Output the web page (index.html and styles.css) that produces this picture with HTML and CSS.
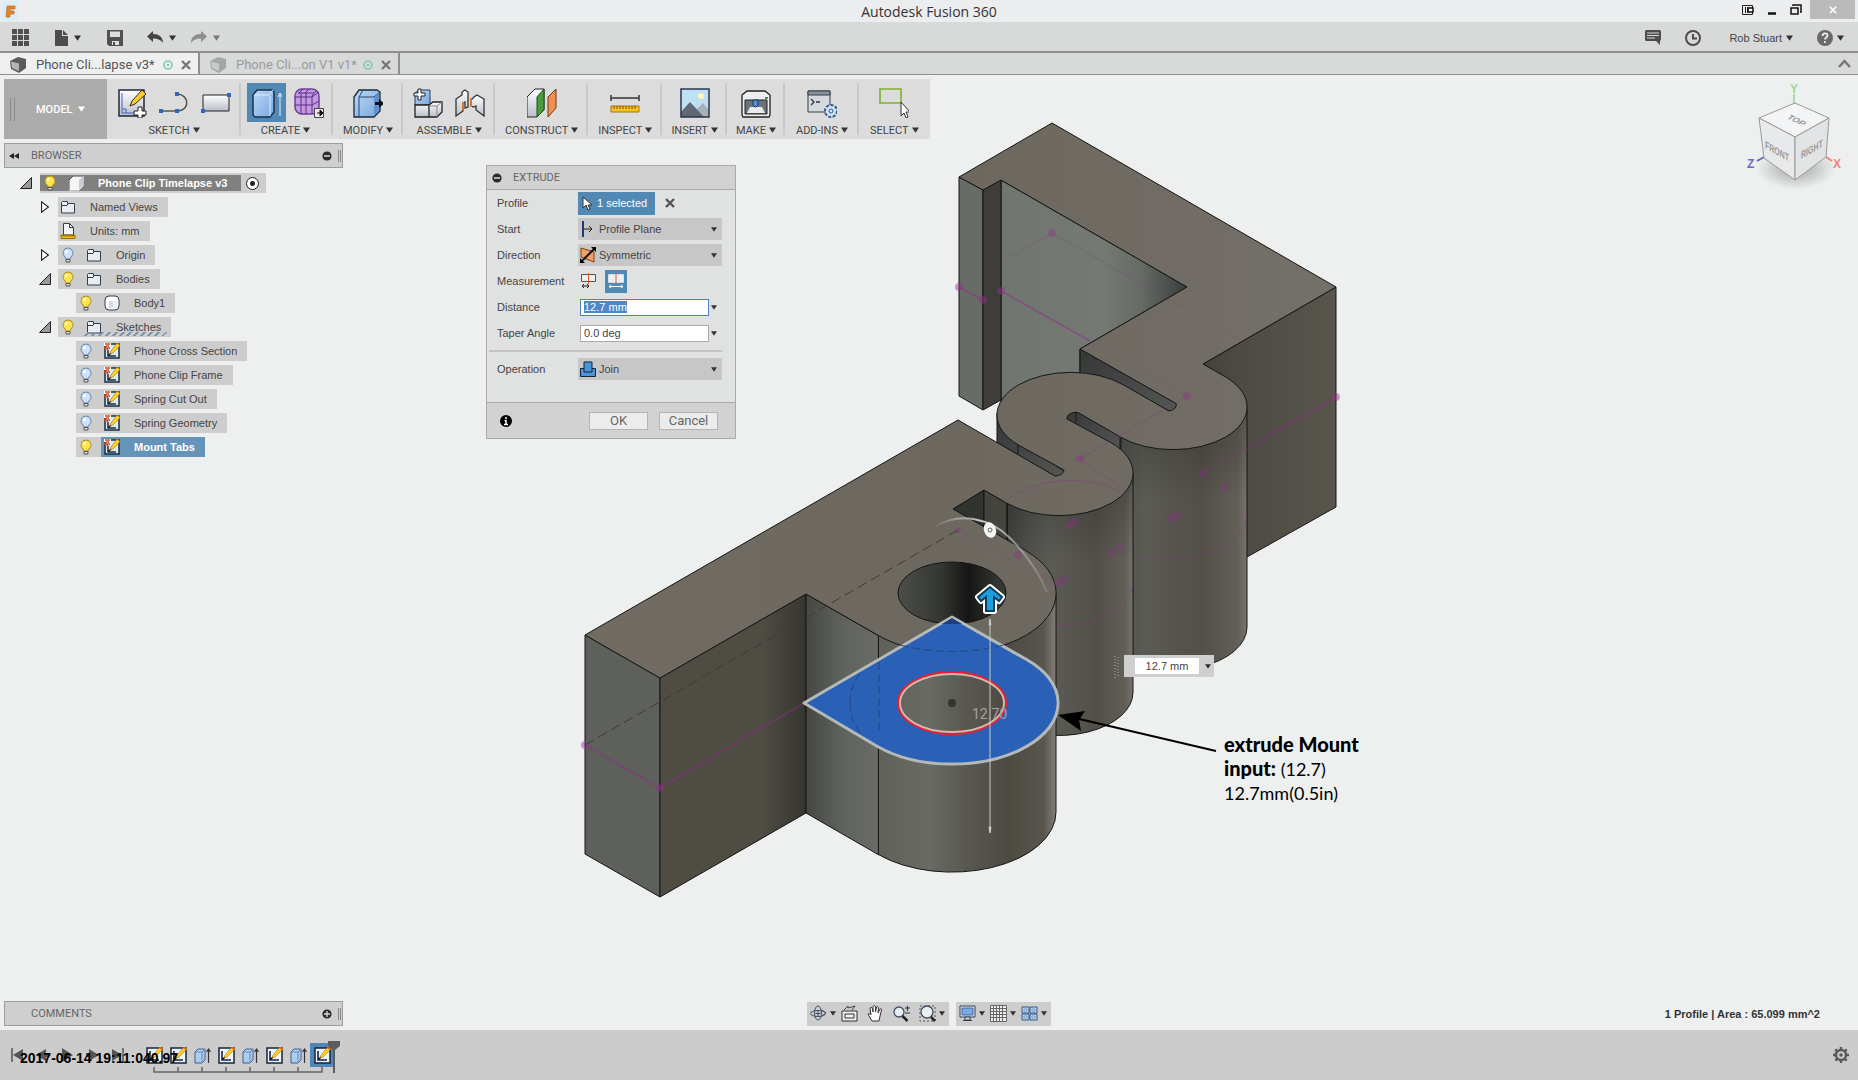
FILE: index.html
```html
<!DOCTYPE html>
<html lang="en">
<head>
  <meta charset="UTF-8">
  <meta name="viewport" content="width=device-width, initial-scale=1.0">
  <title>Autodesk Fusion 360</title>
  <link rel="stylesheet" href="styles.css">
</head>
<body>
  <!-- shared icons -->
  <svg class="defs" aria-hidden="true">
    <defs>
      <linearGradient id="metal" x1="0" y1="0" x2="0" y2="1"><stop offset="0" stop-color="#fff"/><stop offset="1" stop-color="#b9bec8"/></linearGradient>
      <linearGradient id="blue" x1="0" y1="0" x2="1" y2="1"><stop offset="0" stop-color="#bcd8f6"/><stop offset="1" stop-color="#79a7dd"/></linearGradient>
    </defs>
    <symbol id="i-down" viewBox="0 0 8 6"><path d="M0 0h8L4 6z" fill="currentColor"/></symbol>
    <symbol id="i-bulb-on" viewBox="0 0 16 16"><path d="M8 1a5 5 0 0 0-3 9l1 2h4l1-2a5 5 0 0 0-3-9z" fill="#ffe44d" stroke="#a98b2c"/><path d="M6 12.500h4v2.500h-4z" fill="#ddd" stroke="#555"/><circle cx="6.500" cy="4.500" r="1.500" fill="#fff8c0"/></symbol>
    <symbol id="i-bulb-off" viewBox="0 0 16 16"><path d="M8 1a5 5 0 0 0-3 9l1 2h4l1-2a5 5 0 0 0-3-9z" fill="#cfe2fa" stroke="#6583b0"/><path d="M6 12.500h4v2.500h-4z" fill="#ddd" stroke="#555"/><circle cx="6.500" cy="4.500" r="1.500" fill="#fff"/></symbol>
    <symbol id="i-folder" viewBox="0 0 16 16"><path d="M1.500 14V3.500l1-1h5v2h7V14z" fill="#e9edf2" stroke="#333d50"/><path d="M2 6.500h5l1-2" fill="none" stroke="#333d50"/></symbol>
    <symbol id="i-units" viewBox="0 0 16 16"><path d="M3.500 12V.5h6l4 4V12z" fill="#f4f7fa" stroke="#333d50"/><path d="M9.500.5v4h4" fill="none" stroke="#333d50"/><path d="M1 12h14v3.500H1z" fill="#f3c21c" stroke="#9a6a00"/><path d="M3 12v2m2-2v2m2-2v2m2-2v2m2-2v2m2-2v2" stroke="#704c00" stroke-width=".7"/></symbol>
    <symbol id="i-body" viewBox="0 0 16 16"><rect x="1" y="1" width="14" height="14" rx="4" fill="#fff" stroke="#333d50"/><path d="M5 6h4v7H5z" fill="#d5dbe3"/><path d="M10 6h3v7h-3z" fill="#eceff3"/></symbol>
    <symbol id="i-cube" viewBox="0 0 16 16"><path d="M1 5l4-4h10v10l-4 4H1z" fill="#f3f5f7" stroke="#fff"/><path d="M11 5l4-4v10l-4 4z" fill="#c9ced5"/><path d="M1 15V5l4-4h10" fill="none" stroke="#444"/></symbol>
    <symbol id="i-sketch" viewBox="0 0 16 16"><path d="M1 1h14v14H1z" fill="#d8ebf5" stroke="#1d2b40" stroke-width="1.500"/><path d="M4 7v6h8M5 12l3-3" fill="none" stroke="#1d2b40" stroke-width="1.500"/><path d="M13 0l3 2.500L9 10l-3 1 1-3z" fill="#ffd021" stroke="#a77511" stroke-width=".6"/><path d="M0 0h7v3H5v3H2V3H0z" fill="#fff"/><path d="M1 1h5M2 3h3M0 5h6M3.500 5v3" stroke="#cf4c1c" stroke-width="1.500"/></symbol>
    <symbol id="i-tsketch" viewBox="0 0 17 17"><path d="M1 1h15v15H1z" fill="#eef5fa" stroke="#16233c" stroke-width="1.500"/><path d="M4 4v9h9M4 13l4-4" fill="none" stroke="#16233c" stroke-width="1.600"/><path d="M14 0l3 2-8 8-3 1 1-3z" fill="#ffd021" stroke="#a77511" stroke-width=".6"/><path d="M14 0l3 2-1 1-3-2z" fill="#e4552d"/></symbol>
    <symbol id="i-textrude" viewBox="0 0 17 17"><path d="M1 5l3-3h7v11l-3 3H1z" fill="#a9cdf3" stroke="#435f88"/><path d="M8 16V5l3-3M1 5h7" fill="none" stroke="#6887b5"/><path d="M14.500 16V2m-2 3l2-3 2 3" fill="none" stroke="#333" stroke-width="1.200"/></symbol>
    <symbol id="i-dochex" viewBox="0 0 17 16"><path d="M0 4l8-4 8 2v9l-7 5-8-4z" fill="#5b5b5b"/><path d="M1 4.500l8 2V14l-7-3z" fill="#b4b4b4"/></symbol>
    <symbol id="i-x" viewBox="0 0 10 10"><path d="M1 1l8 8M9 1L1 9" stroke="currentColor" stroke-width="2.400"/></symbol>
    <symbol id="i-ring" viewBox="0 0 10 10"><circle cx="5" cy="5" r="4" fill="none" stroke="#82cbb0" stroke-width="1.600"/><circle cx="5" cy="5" r="1.300" fill="#82cbb0"/></symbol>
    <symbol id="i-open" viewBox="0 0 12 12"><path d="M.5 11.500h11v-11z" fill="#999" stroke="#222"/></symbol>
    <symbol id="i-closed" viewBox="0 0 12 14"><path d="M2 1v12l8-6z" fill="#fff" stroke="#222" stroke-width="1.300"/></symbol>
    <symbol id="i-minus" viewBox="0 0 10 10"><circle cx="5" cy="5" r="4.600" fill="#2b2b2b"/><path d="M2 5h6" stroke="#ddd" stroke-width="1.500"/></symbol>
    <symbol id="i-plus" viewBox="0 0 10 10"><circle cx="5" cy="5" r="4.600" fill="#2b2b2b"/><path d="M2 5h6M5 2v6" stroke="#ddd" stroke-width="1.300"/></symbol>
  </svg>

  <header class="titlebar">
    <span class="app-logo"><svg width="11" height="13" viewBox="0 0 11 13"><path d="M2 1h8v3H5v2h4v3H5v3H1z" fill="#e8862a" stroke="#b85d12" stroke-width=".6"/></svg></span>
    <h1>Autodesk Fusion 360</h1>
    <div class="window-buttons">
      <button type="button" aria-label="Display"><svg width="12" height="12" viewBox="0 0 12 12"><path d="M.5 1.500h10v9H.5zM3.500 3v6M5.500 3v6" fill="none" stroke="#222"/><path d="M6 4h5v4H6z" fill="#fff" stroke="#111" stroke-width="1.500"/></svg></button>
      <button type="button" aria-label="Minimize"><svg width="12" height="12" viewBox="0 0 12 12"><path d="M2 9.500h8" stroke="#111" stroke-width="2.500"/></svg></button>
      <button type="button" aria-label="Restore"><svg width="12" height="12" viewBox="0 0 12 12"><path d="M3 2V1h8v7h-1M1 4h7v6H1z" fill="none" stroke="#111" stroke-width="1.500"/></svg></button>
      <button type="button" class="close" aria-label="Close"><svg width="8" height="8" viewBox="0 0 10 10"><path d="M1 1l8 8M9 1L1 9" stroke="#fff" stroke-width="2"/></svg></button>
    </div>
  </header>

  <nav class="appbar">
    <button type="button" aria-label="Data panel"><svg width="17" height="17" viewBox="0 0 17 17"><path d="M0 0h5v5H0zM6 0h5v5H6zM12 0h5v5h-5zM0 6h5v5H0zM6 6h5v5H6zM12 6h5v5h-5zM0 12h5v5H0zM6 12h5v5H6zM12 12h5v5h-5z" fill="#505050"/></svg></button>
    <button type="button" aria-label="File"><svg width="13" height="16" viewBox="0 0 13 16"><path d="M0 0h7v6h6v10H0zM8 0l5 5H8z" fill="#4d4d4d"/></svg><svg class="caret"><use href="#i-down"/></svg></button>
    <button type="button" class="save" aria-label="Save"><svg width="16" height="16" viewBox="0 0 16 16"><path d="M0 0h16v16H2l-2-2z" fill="#505050"/><path d="M3 1.500h10V7H3zM5 11h7v4H5z" fill="#ddd"/><path d="M6 12h2v3H6z" fill="#505050"/></svg></button>
    <button type="button" class="undo" aria-label="Undo"><svg width="16" height="13" viewBox="0 0 16 13"><path d="M0 5.500L6 0v3c6 0 10 3 10 9-2-3-5-4.500-10-4.500V11z" fill="#444"/></svg><svg class="caret"><use href="#i-down"/></svg></button>
    <button type="button" class="redo" aria-label="Redo"><svg width="16" height="13" viewBox="0 0 16 13"><path d="M16 5.500L10 0v3C4 3 0 6 0 12c2-3 5-4.500 10-4.500V11z" fill="#8c8c8c"/></svg><svg class="caret"><use href="#i-down"/></svg></button>
    <div class="appbar-right">
      <button type="button" aria-label="Comments"><svg width="16" height="15" viewBox="0 0 16 15"><path d="M1 0h14l1 1v9l-1 1v4l-4-4H1l-1-1V1z" fill="#4d4d4d"/><path d="M2 3h12M2 5.500h12M2 8h8" stroke="#d8d8d8"/></svg></button>
      <button type="button" aria-label="Job status"><svg width="16" height="16" viewBox="0 0 16 16"><circle cx="8" cy="8" r="7" fill="none" stroke="#4d4d4d" stroke-width="2"/><path d="M8 4v4.500h4" fill="none" stroke="#4d4d4d" stroke-width="2"/></svg></button>
      <button type="button" class="user">Rob Stuart <svg class="caret"><use href="#i-down"/></svg></button>
      <button type="button" aria-label="Help"><svg width="16" height="16" viewBox="0 0 16 16"><circle cx="8" cy="8" r="8" fill="#6a6a6a"/><path d="M5.500 6c0-3.500 5-3.500 5-.5 0 2-2.500 2-2.500 4M8 11v2" fill="none" stroke="#eee" stroke-width="1.800"/></svg><svg class="caret"><use href="#i-down"/></svg></button>
    </div>
  </nav>

  <div class="tabs">
    <div class="tab active"><svg class="doc"><use href="#i-dochex"/></svg><span>Phone Cli...lapse v3*</span><svg class="ring"><use href="#i-ring"/></svg><button type="button" aria-label="Close tab"><svg class="x"><use href="#i-x"/></svg></button></div>
    <div class="tab"><svg class="doc"><use href="#i-dochex"/></svg><span>Phone Cli...on V1 v1*</span><svg class="ring"><use href="#i-ring"/></svg><button type="button" aria-label="Close tab"><svg class="x"><use href="#i-x"/></svg></button></div>
    <button type="button" class="collapse" aria-label="Collapse toolbar"><svg width="13" height="9" viewBox="0 0 13 9"><path d="M1 8l5.500-6L12 8" fill="none" stroke="#777" stroke-width="2.500"/></svg></button>
  </div>

  <main class="workspace">
    <svg class="model" viewBox="0 75 1858 955" role="img" aria-label="Phone clip model">
      <defs>
        <linearGradient id="g-top" x1="0" y1="0" x2="1" y2="0"><stop offset="0" stop-color="#716b63"/><stop offset=".5" stop-color="#6c685f"/><stop offset="1" stop-color="#74706a"/></linearGradient>
        <linearGradient id="g-wall" x1="0" y1="0" x2="1" y2="0"><stop offset="0" stop-color="#70756f"/><stop offset=".55" stop-color="#747973"/><stop offset=".75" stop-color="#676b67"/><stop offset="1" stop-color="#393d3c"/></linearGradient>
        <linearGradient id="g-right" x1="0" y1="0" x2="1" y2="0"><stop offset="0" stop-color="#3c3d38"/><stop offset=".45" stop-color="#4d4b44"/><stop offset="1" stop-color="#59554d"/></linearGradient>
        <linearGradient id="g-cyl" x1="0" y1="0" x2="1" y2="0"><stop offset="0" stop-color="#2c302e"/><stop offset=".3" stop-color="#50524d"/><stop offset=".45" stop-color="#5b5b55"/><stop offset=".75" stop-color="#534f48"/><stop offset=".95" stop-color="#625f58"/><stop offset="1" stop-color="#77746e"/></linearGradient>
        <linearGradient id="g-mount" x1="0" y1="0" x2="1" y2="0"><stop offset="0" stop-color="#5f605a"/><stop offset=".28" stop-color="#686a64"/><stop offset=".5" stop-color="#595850"/><stop offset=".72" stop-color="#4d4a42"/><stop offset=".93" stop-color="#59554e"/><stop offset="1" stop-color="#817e79"/></linearGradient>
        <linearGradient id="g-tab" x1="0" y1="0" x2="1" y2="0"><stop offset="0" stop-color="#454742"/><stop offset=".5" stop-color="#60635d"/><stop offset="1" stop-color="#696c66"/></linearGradient>
        <linearGradient id="g-front" x1="0" y1="0" x2="1" y2="0"><stop offset="0" stop-color="#4f4c44"/><stop offset=".7" stop-color="#4e4c43"/><stop offset="1" stop-color="#36362f"/></linearGradient>
        <linearGradient id="g-hole" x1="0" y1="0" x2="1" y2="0"><stop offset="0" stop-color="#4c4e4a"/><stop offset=".4" stop-color="#343633"/><stop offset=".65" stop-color="#151615"/><stop offset="1" stop-color="#3c3c39"/></linearGradient>
        <linearGradient id="g-slot" x1="0" y1="0" x2="1" y2="1"><stop offset="0" stop-color="#343736"/><stop offset="1" stop-color="#555855"/></linearGradient>
        <linearGradient id="g-shade" x1="0" y1="0" x2="0" y2="1"><stop offset="0" stop-color="#111" stop-opacity=".3"/><stop offset="1" stop-color="#111" stop-opacity="0"/></linearGradient>
        <linearGradient id="g-arc" x1="0" y1="0" x2="1" y2="0"><stop offset="0" stop-color="#c8c9c7" stop-opacity=".1"/><stop offset=".4" stop-color="#c8c9c7"/><stop offset="1" stop-color="#c8c9c7" stop-opacity=".2"/></linearGradient>
      </defs>
      <g stroke="#151513" stroke-linejoin="round">
        <path d="M1001 180L1187 287 1080 349V385L1001 402z" fill="url(#g-wall)"/>
        <path d="M959 177l24 13v220l-24-14z" fill="#686c67"/>
        <path d="M983 190l18-10v220l-18 10z" fill="#3f3d39"/>
        <path d="M1336 287V507L1247 557 1173 520 1203 364z" fill="url(#g-right)"/>
        <path d="M1080 349L1178 404V415L1120 387 1080 378z" fill="url(#g-slot)"/>
        <path d="M1060 407L1120 437V657A74 43 0 0 0 1247 627V407L1173 430z" fill="url(#g-cyl)"/>
        <path d="M1065 414L1080 410 1121 436V455L1100 446 1068 424z" fill="url(#g-slot)"/>
        <path d="M997 413V443L1058 480 1068 474 1019 440z" fill="url(#g-slot)"/>
        <path d="M984 490L1007 503V723A74 43 0 0 0 1133 692V473L1059 480z" fill="url(#g-cyl)"/>
        <path d="M1007 503C1050 522 1110 520 1133 473V560H1007z" fill="url(#g-shade)" stroke="none"/>
        <path d="M1121 438C1160 455 1225 455 1247 407V500H1121z" fill="url(#g-shade)" stroke="none"/>
        <path d="M953 509L984 490V527z" fill="#30332f"/>
        <path d="M984 490L1007 503V542L984 527z" fill="#44443f"/>
        <path d="M585 635L660 678V897L585 854z" fill="#5e605b"/>
        <path d="M660 678L806 594V813L660 897z" fill="url(#g-front)"/>
        <path d="M806 594L879 636V855L806 813z" fill="url(#g-tab)"/>
        <path d="M878.400 635.500V854.500A104 60 0 0 0 1056 812V593L952 620z" fill="url(#g-mount)"/>
        <path d="M1052 123L1336 287 1203 364 1225.300 376.800A74 42.600 0 0 1 1120.700 437.200L1078 412.500A9 6 0 0 0 1067 419L1111.300 442.800A74 42.600 0 0 1 1006.700 503.200L984 490 953 509 1025.600 550.500A104 60 0 0 1 878.400 635.500L806 594 660 678 585 635 958 420 1055 476A9 6 0 0 0 1064 470L1018.700 445.200A74 42.600 0 0 1 1123.300 384.800L1169 411A9 6 0 0 0 1176 403.500L1080 349 1187 287 1001 180 983 190 959 177z" fill="url(#g-top)"/>
        <ellipse cx="952" cy="593" rx="54" ry="31" fill="url(#g-hole)"/>
        <path d="M1120 438v10M1076 412v10M1018 445v9M1007 503v37" fill="none"/>
      </g>

      <!-- sketch geometry behind the body -->
      <g fill="none" stroke="#8d2f87" stroke-opacity=".45">
        <path d="M959 287L983 300M1001 291L1090 341" stroke-width="2"/>
        <path d="M1187 396L1090 341M1052 233L1001 262M1052 233L1240 340" stroke-opacity=".25"/>
        <path d="M1247 449L1336 397" stroke-width="2"/>
        <path d="M585 745L660 788 804 703" stroke-width="2"/>
        <path d="M1187 396L1080 459 1125 490M1203 473L1247 449M1140 558C1190 564 1245 550 1247 515M1056 625C1100 628 1132 605 1133 582M1007 500C1035 475 1100 475 1123 495" stroke-opacity=".4"/>
        <path d="M958 530L1056 585" stroke-opacity=".2"/>
      </g>
      <g fill="#93308e" fill-opacity=".45">
        <circle cx="959" cy="287" r="4"/><circle cx="983" cy="300" r="4"/><circle cx="1001" cy="291" r="4"/>
        <circle cx="1336" cy="397" r="4"/><circle cx="585" cy="745" r="4"/><circle cx="660" cy="788" r="4"/>
      </g>
      <g fill="#8d2f87" fill-opacity=".35">
        <circle cx="1052" cy="233" r="4"/><circle cx="1187" cy="396" r="4"/>
        <circle cx="1203" cy="473" r="4"/><circle cx="1225" cy="487" r="4"/><circle cx="1080" cy="459" r="4"/><circle cx="958" cy="530" r="3"/>
        <circle cx="1018" cy="555" r="4"/><circle cx="1171" cy="518" r="4"/><circle cx="1177" cy="515" r="4"/><circle cx="1069" cy="525" r="4"/><circle cx="1075" cy="522" r="4"/>
        <circle cx="1111" cy="553" r="4"/><circle cx="1120" cy="548" r="4"/><circle cx="1058" cy="583" r="4"/><circle cx="1063" cy="580" r="4"/>
      </g>
      <path d="M585 745L958 530" fill="none" stroke="#3d3b38" stroke-dasharray="10 5"/>

      <!-- selected profile -->
      <path fill-rule="evenodd" d="M804 703L952 617 1027 659.800A106 61 0 0 1 877 746.200zM899 703a53 30 0 0 0 106 0a53 30 0 0 0-106 0z" fill="#2a60b5"/>
      <path d="M804 703L952 617 1027 659.800A106 61 0 0 1 877 746.200z" fill="none" stroke="#b4bab9" stroke-width="3" stroke-linejoin="round"/>
      <path d="M942 624h20l-10-6z" fill="#1c3f7b"/>
      <path d="M900 645Q952 658 1004 645M879 662v70M850 703c0-15 6-25 12-32M850 703c0 15 6 25 12 32" fill="none" stroke="#23477f" stroke-dasharray="8 4"/>
      <ellipse cx="952" cy="703" rx="54" ry="31" fill="none" stroke="#e5202f" stroke-width="2"/>
      <ellipse cx="952" cy="703" rx="52" ry="29" fill="none" stroke="#d9b5ac" stroke-width="2"/>
      <circle cx="952" cy="703" r="4" fill="#33332f"/>

      <!-- drag manipulators -->
      <text x="972" y="719" class="dim">12.70</text>
      <path d="M990 620V832M989 625l1-6 1 6zM989 827l1 6 1-6z" fill="#d6d6d4" stroke="#c9c9c7"/>
      <path d="M936 526C960 512 990 518 1010 538S1040 575 1047 592" fill="none" stroke="url(#g-arc)" stroke-width="2"/>
      <ellipse cx="990" cy="530" rx="6" ry="8" fill="#f4f4f4" transform="rotate(-20 990 530)"/><circle cx="990" cy="530" r="2" fill="none" stroke="#666"/>
      <path d="M990 587l12 10-3 4-5-4v14h-8v-14l-5 4-3-4z" fill="#1c9fe0" stroke="#fff" stroke-width="6" stroke-linejoin="round"/>
      <path d="M990 587l12 10-3 4-5-4v14h-8v-14l-5 4-3-4z" fill="#1c9fe0" stroke="#123c5a" stroke-width="2"/>

      <path d="M1216 751L1075 718" stroke="#000" stroke-width="2"/>
      <path d="M1058 715L1085 711 1079 720 1081 731z"/>
      <path d="M1115 656v22M1118 657v20" stroke="#aaa" stroke-dasharray="1 2"/>
    </svg>

    <div class="ribbon">
      <button type="button" class="workspace-switch"><span class="grip"></span>MODEL <svg class="caret"><use href="#i-down"/></svg></button>
      <div class="group">
        <div class="tools">
          <button type="button" aria-label="Create sketch"><svg viewBox="0 0 30 30"><path d="M2 2h25v26H2z" fill="url(#metal)" stroke="#1f2937" stroke-width="1.500"/><path d="M5 5v20h17M5 21h4v4" fill="none" stroke="#3867b5"/><path d="M25 2l4 4-11 10-5 2 2-5z" fill="#f7cf2d" stroke="#3b2b12"/><path d="M21 19h4v4h4v4h-4v3h-4v-3h-4v-4h4z" fill="#fff" stroke="#222"/></svg></button>
          <button type="button" aria-label="Line"><svg viewBox="0 0 30 30"><path d="M2 23h16c14 0 12-17 0-17" fill="none" stroke="#4d5948" stroke-width="1.500"/><path d="M0 21h4v4H0zM16 21h4v4h-4zM16 4h4v4h-4z" fill="#3565bb"/></svg></button>
          <button type="button" aria-label="Rectangle"><svg viewBox="0 0 30 30"><path d="M2 7h26v16H2z" fill="url(#metal)" stroke="#222"/><path d="M0 21h4v4H0zM26 5h4v4h-4z" fill="#3565bb"/></svg></button>
        </div>
        <button type="button" class="menu">SKETCH <svg class="caret"><use href="#i-down"/></svg></button>
      </div>
      <div class="group create">
        <div class="tools">
          <button type="button" class="selected" aria-label="Extrude"><svg viewBox="0 0 30 30"><path d="M1 7l4-5h15l2 2v20l-4 5H3l-2-2z" fill="url(#blue)" stroke="#17324f" stroke-width="1.500"/><path d="M2 7h15l4-5M18 8v20" fill="none" stroke="#dcecff"/><path d="M28 28V6m-2 3l2-4 2 4" fill="none" stroke="#e8f2fa"/></svg></button>
          <button type="button" aria-label="Create form"><svg viewBox="0 0 30 30"><rect x="1" y="1" width="24" height="25" rx="7" fill="#c39ae0" stroke="#703f99" stroke-width="1.500"/><path d="M1 9h17l7-5M1 17h17l7-4M7 5v21M12 5v21M18 8v18M4 5h16M9 1L5 5m10-4l-4 4m11-2l-4 5" fill="none" stroke="#5c2d86"/><path d="M20.500 20.500h9v9h-9z" fill="#e8e8e8" stroke="#444"/><path d="M23 25h3m0-3l3 3-3 3z" stroke="#111"/></svg></button>
        </div>
        <button type="button" class="menu">CREATE <svg class="caret"><use href="#i-down"/></svg></button>
      </div>
      <div class="group">
        <div class="tools"><button type="button" aria-label="Press pull"><svg viewBox="0 0 30 30"><path d="M1 9l5-7h18l3 2v19l-6 6H1z" fill="url(#blue)" stroke="#17283c" stroke-width="1.300"/><path d="M6 29V9l4-7M6 9h15l6-5" fill="none" stroke="#24476f"/><path d="M21 10v18l5-6V5z" fill="#5f92c9"/><path d="M22 14h4v-3l5 4.500-5 4.500v-3h-4z" fill="#111"/></svg></button></div>
        <button type="button" class="menu">MODIFY <svg class="caret"><use href="#i-down"/></svg></button>
      </div>
      <div class="group">
        <div class="tools">
          <button type="button" aria-label="New component"><svg viewBox="0 0 30 30"><path d="M2 17V5l4-3h11v15z" fill="url(#blue)" stroke="#24405f"/><path d="M2 17h14v12H2zM16 17l4-3h9v10l-5 5h-8z" fill="url(#metal)" stroke="#222" stroke-width="1.300"/><path d="M16 18h8l5-4M24 18v11" fill="none" stroke="#888"/><path d="M5 1h3v4h4v3H8v4H5V8H1V5h4z" fill="#fff" stroke="#222"/></svg></button>
          <button type="button" aria-label="Joint"><svg viewBox="0 0 30 30"><path d="M1 11l6-4V4l3-2 3 2v15l-3 1v-6l-2 1v8l-7 5z" fill="url(#metal)" stroke="#333" stroke-width="1.300"/><path d="M29 11l-7-4-3 2-3 3v6l3 1 2-1v4l8 6z" fill="url(#metal)" stroke="#333" stroke-width="1.300"/><path d="M8 14v8M16 10v9" stroke="#d8742d" stroke-width="2"/></svg></button>
        </div>
        <button type="button" class="menu">ASSEMBLE <svg class="caret"><use href="#i-down"/></svg></button>
      </div>
      <div class="group">
        <div class="tools"><button type="button" aria-label="Offset plane"><svg viewBox="0 0 30 30"><path d="M0 9l8-8h9v21l-7 7H0z" fill="url(#metal)" stroke="#222"/><path d="M10 9l7-8v21l-7 7z" fill="#4a9b3d" stroke="#1f4f1b"/><path d="M21 9l8-8v19l-8 9z" fill="#ee9152" stroke="#71360f"/></svg></button></div>
        <button type="button" class="menu">CONSTRUCT <svg class="caret"><use href="#i-down"/></svg></button>
      </div>
      <div class="group">
        <div class="tools"><button type="button" aria-label="Measure"><svg viewBox="0 0 30 30"><path d="M1 7v6M29 7v6M1 10h28" stroke="#333" stroke-width="1.500"/><path d="M1 18h28v6H1z" fill="#f6c321" stroke="#a87709"/><path d="M4 18v3m3-3v3m3-3v3m3-3v3m3-3v3m3-3v3m3-3v3m3-3v3" stroke="#7c5500"/></svg></button></div>
        <button type="button" class="menu">INSPECT <svg class="caret"><use href="#i-down"/></svg></button>
      </div>
      <div class="group narrow">
        <div class="tools"><button type="button" aria-label="Attached canvas"><svg viewBox="0 0 30 30"><path d="M1 1h28v28H1z" fill="#bfe0f3"/><circle cx="21" cy="8" r="3" fill="#fff7b8"/><path d="M12 26l11-11 6 7v7H12z" fill="#a5b2bc"/><path d="M1 24l9-10 14 15H1z" fill="#5f6873"/><path d="M1 1h28v28H1z" fill="none" stroke="#27364c" stroke-width="1.500"/></svg></button></div>
        <button type="button" class="menu">INSERT <svg class="caret"><use href="#i-down"/></svg></button>
      </div>
      <div class="group narrow">
        <div class="tools"><button type="button" aria-label="3D print"><svg viewBox="0 0 30 30"><path d="M1 7l5-4h18l5 4v20l-1 2H2l-1-2z" fill="#eceef0" stroke="#222" stroke-width="1.300"/><path d="M4 12h22v14H4z" fill="#6b737b" stroke="#222"/><path d="M9 19h12l3 6H6z" fill="#e9edf0"/><path d="M12 12h5v5l-2 2h-1l-2-2z" fill="#4b93dd" stroke="#173963"/><path d="M24 9h3v2h-3z" fill="#3b9a32"/></svg></button></div>
        <button type="button" class="menu">MAKE <svg class="caret"><use href="#i-down"/></svg></button>
      </div>
      <div class="group wide">
        <div class="tools"><button type="button" aria-label="Scripts and add-ins"><svg viewBox="0 0 30 30"><path d="M1 3h22v21H1z" fill="#d5d9de" stroke="#333c48"/><path d="M1 3h22v4H1z" fill="#8b929b" stroke="#333c48"/><path d="M4 11l3 3-3 3M9 14h4" fill="none" stroke="#333" stroke-width="1.300"/><circle cx="24" cy="23" r="6" fill="#d3e4f4" stroke="#315a88" stroke-width="2" stroke-dasharray="3 1.500"/><circle cx="24" cy="23" r="2" fill="none" stroke="#315a88"/></svg></button></div>
        <button type="button" class="menu">ADD-INS <svg class="caret"><use href="#i-down"/></svg></button>
      </div>
      <div class="group wide">
        <div class="tools"><button type="button" aria-label="Select"><svg viewBox="0 0 30 30"><path d="M1 1h21v14H1z" fill="none" stroke="#7faf2c" stroke-width="1.600"/><path d="M22 14v14l3-3 2 5 2-1-2-5h4z" fill="#fff" stroke="#333"/></svg></button></div>
        <button type="button" class="menu">SELECT <svg class="caret"><use href="#i-down"/></svg></button>
      </div>
    </div>

    <aside class="browser">
      <div class="panel-head">
        <svg width="10" height="6" viewBox="0 0 10 6"><path d="M5 0v6L0 3zM10 0v6L5 3z" fill="#222"/></svg>
        <span>BROWSER</span>
        <button type="button" aria-label="Collapse browser"><svg width="10" height="10"><use href="#i-minus"/></svg></button>
        <i class="handle"></i>
      </div>
      <ul class="tree">
        <li class="l0"><svg class="tri"><use href="#i-open"/></svg><div class="node root"><svg><use href="#i-bulb-on"/></svg><svg><use href="#i-cube"/></svg><span>Phone Clip Timelapse v3</span></div><label class="activate"><input type="radio" name="active" aria-label="Activate component" checked></label></li>
        <li><svg class="tri"><use href="#i-closed"/></svg><div class="node"><svg><use href="#i-folder"/></svg><span>Named Views</span></div></li>
        <li><i class="tri"></i><div class="node"><svg><use href="#i-units"/></svg><span>Units: mm</span></div></li>
        <li><svg class="tri"><use href="#i-closed"/></svg><div class="node"><svg><use href="#i-bulb-off"/></svg><svg><use href="#i-folder"/></svg><span>Origin</span></div></li>
        <li><svg class="tri"><use href="#i-open"/></svg><div class="node"><svg><use href="#i-bulb-on"/></svg><svg><use href="#i-folder"/></svg><span>Bodies</span></div></li>
        <li class="l2"><div class="node"><svg><use href="#i-bulb-on"/></svg><svg><use href="#i-body"/></svg><span>Body1</span></div></li>
        <li><svg class="tri"><use href="#i-open"/></svg><div class="node partial"><svg><use href="#i-bulb-on"/></svg><svg><use href="#i-folder"/></svg><span>Sketches</span></div></li>
        <li class="l2"><div class="node"><svg><use href="#i-bulb-off"/></svg><svg><use href="#i-sketch"/></svg><span>Phone Cross Section</span></div></li>
        <li class="l2"><div class="node"><svg><use href="#i-bulb-off"/></svg><svg><use href="#i-sketch"/></svg><span>Phone Clip Frame</span></div></li>
        <li class="l2"><div class="node"><svg><use href="#i-bulb-off"/></svg><svg><use href="#i-sketch"/></svg><span>Spring Cut Out</span></div></li>
        <li class="l2"><div class="node"><svg><use href="#i-bulb-off"/></svg><svg><use href="#i-sketch"/></svg><span>Spring Geometry</span></div></li>
        <li class="l2"><div class="node picked"><svg><use href="#i-bulb-on"/></svg><svg><use href="#i-sketch"/></svg><span>Mount Tabs</span></div></li>
      </ul>
    </aside>

    <form class="dialog">
      <div class="dialog-head"><svg width="10" height="10"><use href="#i-minus"/></svg><h2>EXTRUDE</h2></div>
      <div class="dialog-body">
        <div class="row">
          <label for="profile">Profile</label>
          <button type="button" id="profile" class="picker"><svg width="11" height="15" viewBox="0 0 11 15"><path d="M1 1v11l3-3 2 5 2-1-2-4h4z" fill="#fff" stroke="#333"/></svg>1 selected</button>
          <button type="button" class="clear" aria-label="Clear selection"><svg width="10" height="10"><use href="#i-x"/></svg></button>
        </div>
        <div class="row">
          <label for="start">Start</label>
          <div class="select"><svg class="lead" viewBox="0 0 16 16"><path d="M3 0v16" stroke="#1d3a78" stroke-width="2"/><path d="M4 8h8m-3-3l3 3-3 3" fill="none" stroke="#222"/></svg><select id="start"><option>Profile Plane</option></select><svg class="caret"><use href="#i-down"/></svg></div>
        </div>
        <div class="row">
          <label for="direction">Direction</label>
          <div class="select"><svg class="lead" viewBox="0 0 16 16"><path d="M1 1l13 4v10L1 10z" fill="#f4a061" stroke="#7b4012"/><path d="M2 14L14 2" stroke="#111" stroke-width="2"/><path d="M11 0h5v5zM0 11v5h5z"/></svg><select id="direction"><option>Symmetric</option></select><svg class="caret"><use href="#i-down"/></svg></div>
        </div>
        <div class="row measure">
          <label for="half">Measurement</label>
          <button type="button" id="half" aria-label="Half length"><svg width="16" height="16" viewBox="0 0 16 16"><path d="M.5 1.500h14v7H.5z" fill="#eee" stroke="#555"/><path d="M7.500 0v11" stroke="#e05a2c"/><path d="M1 13h7M3 11l-2 2 2 2M6 11l2 2-2 2" fill="none" stroke="#222"/></svg></button>
          <button type="button" class="on" aria-label="Whole length"><svg width="16" height="16" viewBox="0 0 16 16"><path d="M.5 1.500h15v8H.5z" fill="#eee" stroke="#ddd"/><path d="M8 0v10" stroke="#e05a2c"/><path d="M1 13.500h14M3 12l-2 1.500L3 15M13 12l2 1.500-2 1.500" fill="none" stroke="#fff"/></svg></button>
        </div>
        <div class="row">
          <label for="distance">Distance</label>
          <div class="value"><input type="text" id="distance" value="12.7 mm" autofocus><svg class="caret"><use href="#i-down"/></svg></div>
        </div>
        <div class="row">
          <label for="taper">Taper Angle</label>
          <div class="value"><input type="text" id="taper" value="0.0 deg"><svg class="caret"><use href="#i-down"/></svg></div>
        </div>
        <hr>
        <div class="row">
          <label for="operation">Operation</label>
          <div class="select"><svg class="lead" viewBox="0 0 16 16"><path d="M0.500 7.500h15v8H.5z" fill="#4a95d8" stroke="#10243e"/><path d="M4 1h8v10H4z" fill="#4a95d8" stroke="#10243e"/></svg><select id="operation"><option>Join</option></select><svg class="caret"><use href="#i-down"/></svg></div>
        </div>
      </div>
      <div class="dialog-foot">
        <svg width="12" height="12" viewBox="0 0 12 12"><circle cx="6" cy="6" r="6"/><path d="M6 2v2M4.500 5.500H6V9M4 9.500h4" fill="none" stroke="#fff" stroke-width="1.500"/></svg>
        <button type="button">OK</button>
        <button type="button">Cancel</button>
      </div>
    </form>

    <div class="float-value"><input type="text" value="12.7 mm" aria-label="Distance"><svg class="caret"><use href="#i-down"/></svg></div>
    <p class="note"><b>extrude Mount<br>input:</b> (12.7)<br>12.7mm(0.5in)</p>

    <svg class="viewcube" width="110" height="115" viewBox="1740 80 110 115" role="img" aria-label="View cube">
      <defs><radialGradient id="shadow"><stop offset="0" stop-color="#888" stop-opacity=".8"/><stop offset="1" stop-color="#999" stop-opacity="0"/></radialGradient></defs>
      <ellipse cx="1796" cy="168" rx="40" ry="22" fill="url(#shadow)"/>
      <path d="M1794 104V94" stroke-width="2" stroke="#a4dca0"/>
      <path d="M1764 157l-7 4" stroke-width="2" stroke="#6a64c4"/><path d="M1826 157l6 4" stroke-width="2" stroke="#ec8078"/>
      <g stroke="#999" stroke-linejoin="round">
        <path d="M1795 103l34 15-34 19-36-19z" fill="#f3f4f5"/>
        <path d="M1759 118l36 19v43l-31-22z" fill="#e8e9eb"/>
        <path d="M1829 118l-34 19v43l31-23z" fill="#e2e3e5"/>
      </g>
      <text class="face" transform="matrix(.8 .4 -.7 .5 1786 118)">TOP</text>
      <text class="face" transform="matrix(.7 .4 0 1.050 1765 148)">FRONT</text>
      <text class="face" transform="matrix(.7 -.4 0 1.050 1801 159)">RIGHT</text>
      <text x="1790" y="93" class="axis" fill="#97dc93">Y</text>
      <text x="1747" y="168" class="axis" fill="#6e68c8">Z</text>
      <text x="1833" y="168" class="axis" fill="#f0827a">X</text>
    </svg>

    <div class="bottom">
      <div class="panel-head comments"><span>COMMENTS</span><button type="button" aria-label="Expand comments"><svg width="10" height="10"><use href="#i-plus"/></svg></button><i class="handle"></i></div>
      <div class="navbars">
        <div class="navbar">
          <button type="button" aria-label="Orbit"><svg width="17" height="17" viewBox="0 0 17 17"><ellipse cx="8" cy="8" rx="3.500" ry="7" fill="none" stroke="#405066"/><ellipse cx="8" cy="8.500" rx="7.500" ry="3" fill="none" stroke="#405066"/><path d="M8 6v5M5.500 8.500h5M12 5l4 3-4 3" fill="none" stroke="#405066"/></svg><svg class="caret"><use href="#i-down"/></svg></button>
          <button type="button" class="plain" aria-label="Look at"><svg width="17" height="17" viewBox="0 0 17 17"><path d="M1 6h15v10H1zM4 9h9v4H4z" fill="#eee" stroke="#333"/><path d="M3 5l4-4v2l7-2-3 4" fill="none" stroke="#444"/></svg></button>
          <button type="button" class="plain" aria-label="Pan"><svg width="17" height="17" viewBox="0 0 17 17"><path d="M5 16L1 9c1-1 2 0 3 1L3 3c1-1 2-1 2.500 1L6 7V1.500c1-1 2-1 2.500 0V7l1-5c1-1 2 0 2 1l-.5 5 2-4c1-.5 2 0 1.500 1L13 11l-1 5z" fill="#fff" stroke="#333"/></svg></button>
          <button type="button" class="plain" aria-label="Zoom"><svg width="17" height="17" viewBox="0 0 17 17"><circle cx="6" cy="7" r="5" fill="#e4edf3" stroke="#405066" stroke-width="1.300"/><path d="M9.500 11l5 5" stroke="#222" stroke-width="2.500"/><path d="M12 3h5M14.500 1v5M12 8h5" stroke="#333"/></svg></button>
          <button type="button" aria-label="Fit"><svg width="17" height="17" viewBox="0 0 17 17"><path d="M1 1h15v15H1z" fill="none" stroke="#555" stroke-dasharray="2 2"/><circle cx="8" cy="7" r="6" fill="#eaf0ef" stroke="#405066" stroke-width="1.300"/><path d="M12 12l4 4" stroke="#222" stroke-width="2.500"/></svg><svg class="caret"><use href="#i-down"/></svg></button>
        </div>
        <div class="navbar">
          <button type="button" aria-label="Display settings"><svg width="17" height="17" viewBox="0 0 17 17"><path d="M1 1h15v11H1z" fill="#dfe9f4" stroke="#333d50"/><path d="M3 3h11v7H3z" fill="#79aae3" stroke="#44699b"/><path d="M6 12h5v3H6zM4 15.500h9" fill="#ddd" stroke="#333d50"/></svg><svg class="caret"><use href="#i-down"/></svg></button>
          <button type="button" aria-label="Grid"><svg width="17" height="17" viewBox="0 0 17 17"><path d="M.5.5h16v16H.5zM3.500 0v17M6.500 0v17M9.500 0v17M12.500 0v17M0 3.500h17M0 6.500h17M0 9.500h17M0 12.500h17" fill="#eee" stroke="#666"/></svg><svg class="caret"><use href="#i-down"/></svg></button>
          <button type="button" aria-label="Viewports"><svg width="17" height="17" viewBox="0 0 17 17"><path d="M1 2h7v6H1zM9 2h7v6H9zM1 9h7v6H1zM9 9h7v6H9z" fill="#c3daf5" stroke="#35537e"/><path d="M3 4h3v2H3zM11 4h3v2h-3zM3 11h3v2H3zM11 11h3v2h-3z" fill="#fff" stroke="#6b93c8"/></svg><svg class="caret"><use href="#i-down"/></svg></button>
        </div>
      </div>
      <p class="status">1 Profile | Area : 65.099 mm^2</p>
    </div>
  </main>

  <footer class="timeline">
    <div class="playback">
      <button type="button" aria-label="Go to start"><svg viewBox="0 0 13 14"><path d="M1 0v14" stroke="#555" stroke-width="1.500"/><path d="M12 1v12L2 7z"/></svg></button>
      <button type="button" aria-label="Step back"><svg viewBox="0 0 13 14"><path d="M10 1v12L0 7zM10 5h3v4h-3z"/></svg></button>
      <button type="button" aria-label="Play"><svg viewBox="0 0 13 14"><path d="M1 0v14l11-7z"/></svg></button>
      <button type="button" aria-label="Step forward"><svg viewBox="0 0 13 14"><path d="M3 1v12l10-6zM0 5h3v4H0z"/></svg></button>
      <button type="button" aria-label="Go to end"><svg viewBox="0 0 13 14"><path d="M12 0v14" stroke="#555" stroke-width="1.500"/><path d="M1 1v12l10-6z"/></svg></button>
    </div>
    <div class="features">
      <button type="button" aria-label="Sketch"><svg><use href="#i-tsketch"/></svg></button>
      <button type="button" aria-label="Sketch"><svg><use href="#i-tsketch"/></svg></button>
      <button type="button" aria-label="Extrude"><svg><use href="#i-textrude"/></svg></button>
      <button type="button" aria-label="Sketch"><svg><use href="#i-tsketch"/></svg></button>
      <button type="button" aria-label="Extrude"><svg><use href="#i-textrude"/></svg></button>
      <button type="button" aria-label="Sketch"><svg><use href="#i-tsketch"/></svg></button>
      <button type="button" aria-label="Extrude"><svg><use href="#i-textrude"/></svg></button>
      <button type="button" class="current" aria-label="Sketch"><svg><use href="#i-tsketch"/></svg></button>
      <svg class="track" width="190" height="34" viewBox="0 0 190 34"><path d="M12 26v5h168v-5M36 26v5M60 26v5M84 26v5M108 26v5M132 26v5M156 26v5" fill="none" stroke="#666" stroke-width="1.500"/></svg>
      <svg class="marker" width="12" height="32" viewBox="0 0 12 32"><path d="M0 0h12v5L7 9v23H5V9L0 5z" fill="#5c5c5c"/></svg>
    </div>
    <time class="stamp">2017-06-14 19:11:040.97</time>
    <button type="button" class="settings" aria-label="Settings"><svg width="16" height="16" viewBox="0 0 16 16"><circle cx="8" cy="8" r="5" fill="none" stroke="#5a5a5a" stroke-width="2.500"/><circle cx="8" cy="8" r="1.800" fill="#5a5a5a"/><path d="M8 0v3M8 13v3M0 8h3M13 8h3M2.300 2.300l2 2M11.700 11.700l2 2M2.300 13.700l2-2M11.700 4.300l2-2" stroke="#5a5a5a" stroke-width="2.500"/></svg></button>
  </footer>

  <script>
    const distance = document.getElementById("distance");
    distance.focus();
    distance.select();
  </script>
</body>
</html>
```

FILE: styles.css
```css
* {
  box-sizing: border-box;
}
body {
  display: flex;
  flex-direction: column;
  height: 100vh;
  margin: 0;
  overflow: hidden;
  background-color: #eef0f0;
  color: #444;
  font-family: "Liberation Sans", Arial, sans-serif;
  font-size: 11px;
}
button {
  display: flex;
  align-items: center;
  padding: 0;
  border: none;
  background: none;
  color: inherit;
  font: inherit;
  white-space: nowrap;
}
svg {
  display: block;
  flex: none;
}
.defs {
  position: absolute;
  width: 0;
  height: 0;
}
.caret {
  width: 7px;
  height: 6px;
  color: #333;
}

/* title bar */
.titlebar {
  display: grid;
  grid-template-columns: 1fr auto 1fr;
  align-items: center;
  height: 22px;
  background-color: #ecedee;
}
.titlebar h1 {
  margin: 0;
  font: 14px "Open Sans", sans-serif;
  color: #333;
}
.app-logo {
  display: flex;
  align-items: center;
  justify-content: center;
  width: 16px;
  height: 20px;
  margin-left: 2px;
  background-color: #d9eef8;
}
.window-buttons {
  display: flex;
  align-self: start;
  justify-content: flex-end;
  align-items: center;
  gap: 12px;
  padding-right: 3px;
}
.window-buttons .close {
  justify-content: center;
  width: 45px;
  height: 19px;
  margin-left: -4px;
  background-color: #bababa;
}

/* application bar */
.appbar {
  display: flex;
  align-items: center;
  height: 31px;
  padding: 2px 14px 0 12px;
  border-bottom: 2px solid #8f8f8f;
  background-color: #d8d9d9;
}
.appbar > button {
  gap: 6px;
  margin-right: 26px;
}
.appbar > .save {
  margin-right: 24px;
}
.appbar > .undo {
  margin-right: 15px;
}
.redo .caret {
  color: #777;
}
.appbar-right {
  display: flex;
  align-items: center;
  gap: 24px;
  margin-left: auto;
}
.appbar-right button {
  gap: 4px;
}
.appbar-right .user {
  margin-left: 4px;
}

/* document tabs */
.tabs {
  display: flex;
  height: 22px;
  border-bottom: 1px solid #8f8f8f;
  background-color: #d8d9d9;
}
.tab {
  display: flex;
  align-items: center;
  width: 200px;
  padding: 2px 7px 0 10px;
  border-right: 2px solid #8f8f8f;
  font: 13px Roboto, sans-serif;
  color: #9a9a9a;
}
.tab span {
  margin-left: 9px;
}
.tab.active {
  background-color: #eef0f0;
  color: #555;
}
.tab:not(.active) .doc {
  opacity: .4;
}
.doc {
  width: 17px;
  height: 16px;
}
.ring, .x {
  width: 10px;
  height: 10px;
}
.ring {
  margin-left: auto;
}
.x {
  margin-left: 8px;
  color: #777;
}
.collapse {
  margin-left: auto;
  padding-right: 7px;
}

/* canvas */
.workspace {
  position: relative;
  display: flex;
  flex: 1;
  flex-direction: column;
  align-items: flex-start;
  min-height: 0;
  padding: 4px;
}
.model {
  position: absolute;
  inset: 0;
  width: 100%;
  height: 100%;
}
.dim {
  font: 14px Roboto, sans-serif;
  fill: #a3a39d;
}
.ribbon, .browser, .bottom {
  position: relative;
}

/* ribbon */
.ribbon {
  display: flex;
  height: 60px;
  background-color: #dcdcdc;
  font-family: Roboto, sans-serif;
}
.workspace-switch {
  gap: 5px;
  width: 103px;
  padding-left: 6px;
  background-color: #ababab;
  color: #fff;
  font-weight: 500;
}
.workspace-switch .caret {
  color: #fff;
}
.grip {
  width: 5px;
  height: 23px;
  margin-right: 16px;
  border: 1px solid #888;
  border-width: 0 1px;
}
.group {
  position: relative;
  display: flex;
  flex-direction: column;
  align-items: center;
  padding: 4px 10px 0;
}
.group:not(:last-child)::after {
  content: "";
  position: absolute;
  top: 4px;
  right: 0;
  width: 2px;
  height: 52px;
  background-color: #c9c9c9;
}
.narrow {
  padding: 4px 9px 0;
}
.wide {
  padding: 4px 11px 0;
}
.tools {
  display: flex;
  align-items: center;
  gap: 12px;
  height: 39px;
}
.tools svg {
  width: 30px;
  height: 30px;
}
.create {
  padding: 4px 9px 0 6px;
}
.create .tools {
  gap: 8px;
}
.selected {
  justify-content: center;
  width: 39px;
  height: 39px;
  background-color: #5288b4;
}
.menu {
  gap: 3px;
  height: 16px;
}

/* browser */
.browser {
  width: 339px;
  margin-top: 4px;
}
.panel-head {
  display: flex;
  align-items: center;
  height: 25px;
  padding: 0 1px 0 4px;
  border: 1px solid #9c9c9c;
  background-color: #cfcfcf;
  font-family: Roboto, sans-serif;
  color: #666;
}
.panel-head span {
  margin-left: 12px;
}
.panel-head button {
  margin-left: auto;
}
.handle {
  width: 3px;
  height: 12px;
  margin-left: 6px;
  border: 1px solid #888;
  border-width: 0 1px;
}
.tree {
  display: flex;
  flex-direction: column;
  gap: 4px;
  margin: 5px 0 0;
  padding: 0;
  list-style: none;
}
.tree li {
  display: flex;
  align-items: center;
  height: 20px;
  padding-left: 35px;
}
.tree .l0 {
  padding-left: 16px;
}
.tree .l2 {
  padding-left: 72px;
}
.tri {
  width: 12px;
  height: 12px;
  margin-right: 7px;
}
.l0 .tri {
  margin-right: 8px;
}
.node {
  display: flex;
  align-items: center;
  height: 20px;
  padding: 0 10px 0 2px;
  background-color: #cdcdcd;
}
.node svg {
  width: 16px;
  height: 16px;
}
.node svg + svg {
  margin-left: 10px;
}
.node span {
  margin-left: 14px;
}
.node.root {
  padding-right: 14px;
  border: solid #cdcdcd;
  border-width: 2px 0;
  background-color: #808080;
  color: #fff;
  font-weight: bold;
}
.activate {
  display: flex;
  align-items: center;
  height: 20px;
  padding: 0 7px 0 5px;
  background-color: #cdcdcd;
}
.activate input {
  appearance: none;
  width: 13px;
  height: 13px;
  margin: 0;
  border: 1px solid #222;
  border-radius: 50%;
  background: radial-gradient(#222 2px, #fff 3px);
}
.node.partial {
  position: relative;
}
.node.partial::after {
  content: "";
  position: absolute;
  right: 2px;
  bottom: 1px;
  left: 25px;
  height: 4px;
  background: repeating-linear-gradient(135deg, transparent 0 3px, #8195b0 3px 5px);
}
.node.picked {
  background: linear-gradient(to right, #cdcdcd 25px, #6694b9 25px);
  color: #fff;
  font-weight: bold;
}

/* extrude dialog */
.dialog {
  position: absolute;
  top: 90px;
  left: 486px;
  width: 250px;
  border: 1px solid #a9a9a9;
  background-color: #e0e1e1;
}
.dialog-head {
  display: flex;
  align-items: center;
  gap: 11px;
  height: 24px;
  padding-left: 5px;
  border-bottom: 1px solid #a9a9a9;
  background-color: #d2d2d3;
}
.dialog-head h2 {
  margin: 0;
  font: 11px Roboto, sans-serif;
  color: #666;
}
.dialog-body {
  height: 212px;
  padding: 0 13px 0 10px;
}
.row {
  display: flex;
  align-items: center;
  height: 26px;
}
.row > label {
  flex: none;
  width: 81px;
}
.picker {
  gap: 4px;
  width: 77px;
  height: 23px;
  padding-left: 4px;
  background-color: #5288b4;
  color: #fff;
}
.clear {
  margin-left: 10px;
  color: #555;
}
.select {
  position: relative;
  flex: 1;
}
.select select {
  appearance: none;
  width: 100%;
  height: 22px;
  padding: 0 20px 0 21px;
  border: none;
  border-radius: 0;
  background-color: #c7c7c7;
  color: #444;
  font: inherit;
}
.lead {
  position: absolute;
  top: 3px;
  left: 2px;
  width: 16px;
  height: 16px;
}
.dialog .caret {
  width: 6px;
  height: 5px;
}
.select .caret {
  position: absolute;
  top: 9px;
  right: 5px;
}
.measure button {
  justify-content: center;
  width: 22px;
  height: 23px;
  margin-right: 5px;
}
.measure .on {
  background-color: #5288b4;
}
.value {
  display: flex;
  flex: 1;
  align-items: center;
  gap: 2px;
  min-width: 0;
  padding: 0 5px 0 2px;
}
.value input {
  flex: 1;
  min-width: 0;
  height: 17px;
  padding: 0 3px;
  border: 1px solid #aaa;
  background-color: #fff;
  color: #444;
  font: inherit;
}
.value input:focus {
  border-color: #4f81bd;
  outline: none;
}
input::selection {
  background-color: #4f88c7;
  color: #fff;
}
.dialog hr {
  height: 2px;
  margin: 4px 0 4px -8px;
  border: none;
  background-color: #c4c4c4;
}
.dialog-foot {
  display: flex;
  align-items: center;
  gap: 11px;
  height: 36px;
  padding: 0 17px 0 13px;
  border-top: 1px solid #a9a9a9;
  background-color: #d2d2d3;
}
.dialog-foot svg {
  margin-right: auto;
}
.dialog-foot button {
  justify-content: center;
  width: 59px;
  height: 18px;
  border: 1px solid #b5b5b5;
  background-color: #ececec;
  color: #666;
  font: 13px Roboto, sans-serif;
}

/* on-canvas input and note */
.float-value {
  position: absolute;
  top: 580px;
  left: 1124px;
  display: flex;
  align-items: center;
  gap: 6px;
  height: 22px;
  padding: 0 3px 0 11px;
  background-color: #cfcfcf;
}
.float-value .caret {
  width: 6px;
  height: 5px;
}
.float-value input {
  width: 64px;
  height: 16px;
  padding: 0;
  border: none;
  background-color: #fff;
  color: #444;
  font: inherit;
  text-align: center;
}
.note {
  position: absolute;
  top: 658px;
  left: 1224px;
  margin: 0;
  color: #000;
  font: 18px/24px Lato, sans-serif;
}
.note b {
  font-size: 20px;
  font-weight: 900;
  line-height: 20px;
}
.viewcube {
  position: absolute;
  top: 5px;
  right: 8px;
}
.face {
  font: bold 10px "Liberation Sans", sans-serif;
  fill: #999;
}
.axis {
  font: bold 12px "Liberation Sans", sans-serif;
}

/* bottom strip */
.bottom {
  display: grid;
  grid-template-columns: 1fr auto 1fr;
  align-items: center;
  align-self: stretch;
  margin-top: auto;
}
.comments {
  width: 339px;
}
.comments span {
  margin-left: 22px;
}
.navbars {
  display: flex;
  gap: 7px;
}
.navbar {
  display: flex;
  align-items: center;
  gap: 5px;
  height: 24px;
  padding: 0 4px 0 3px;
  background-color: #cdcdcd;
}
.navbar button {
  gap: 3px;
}
.navbar .plain {
  margin-right: 4px;
}
.navbar .caret {
  width: 6px;
  height: 5px;
}
.status {
  margin: 0 34px 0 0;
  color: #333;
  font-weight: bold;
  text-align: right;
}

/* timeline */
.timeline {
  position: relative;
  display: flex;
  align-items: center;
  height: 50px;
  padding: 0 9px 0 11px;
  background-color: #cdcccc;
}
.playback {
  display: flex;
  gap: 12px;
}
.playback svg {
  width: 13px;
  height: 14px;
  fill: #555;
}
.features {
  position: relative;
  display: flex;
  align-items: center;
  margin-left: 18px;
}
.features button {
  justify-content: center;
  width: 24px;
  height: 24px;
}
.features button svg {
  width: 17px;
  height: 17px;
}
.features .current {
  background-color: #4f86b5;
}
.track {
  position: absolute;
  top: -2px;
  left: 0;
}
.marker {
  position: absolute;
  top: -2px;
  right: -6px;
}
.stamp {
  position: absolute;
  top: 20px;
  left: 20px;
  color: #000;
  font-size: 14px;
  font-weight: bold;
}
.settings {
  margin-left: auto;
}
```
